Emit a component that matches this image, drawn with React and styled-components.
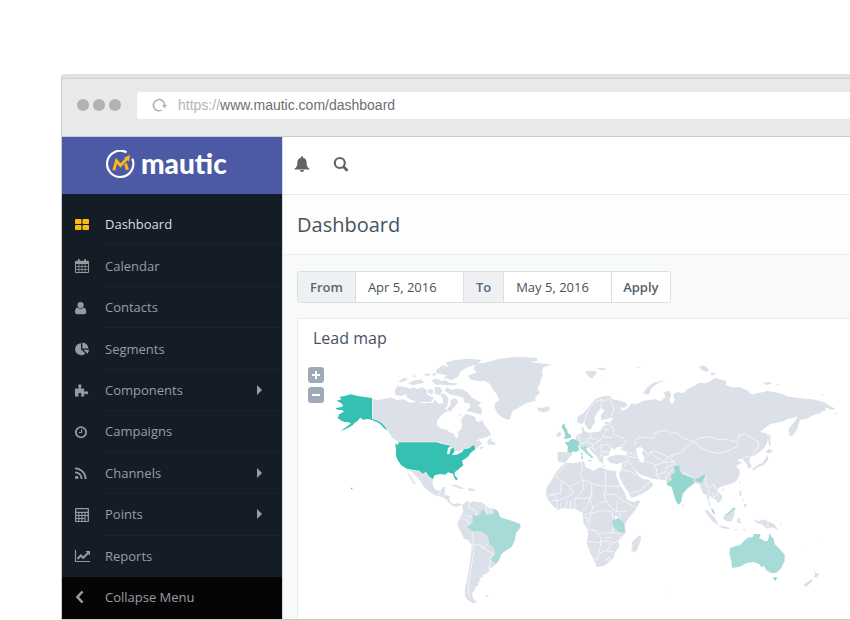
import React, { useState } from "react";
import styled, { createGlobalStyle } from "styled-components";

const GlobalStyle = createGlobalStyle`
  * {
    box-sizing: border-box;
  }

  body {
    margin: 0;
    background: #fff;
    color: #47535f;
    font-family: "Open Sans", "Noto Sans", sans-serif;
    font-size: 13px;
    overflow-x: hidden;
  }

  button,
  input {
    font: inherit;
    color: inherit;
  }
`;

const Page = styled.div`
  padding: 74px 0 0 61px;
`;

const Browser = styled.div`
  border: 1px solid #c9cbcc;
  border-right: none;
  border-top: 4px solid #e2e2e2;
  border-top-left-radius: 4px;
  overflow: hidden;
`;

const Chrome = styled.header`
  display: flex;
  align-items: center;
  height: 59px;
  padding: 0 0 5px 15px;
  background: #e8e9ea;
  border-top: 1px solid #cdcecf;
  border-bottom: 1px solid #c9cbcc;
`;

const Dots = styled.div`
  display: flex;
  gap: 4px;
  width: 60px;
`;

const Dot = styled.span`
  width: 12px;
  height: 12px;
  border-radius: 50%;
  background: #b1b2b4;
`;

const Address = styled.label`
  flex: 1;
  display: flex;
  align-items: center;
  height: 27px;
  padding-left: 15px;
  background: #fff;
  border-radius: 3px 0 0 3px;
  font-family: "Liberation Sans", Arial, sans-serif;
  font-size: 14px;
  color: #b3b4b6;
`;

const Scheme = styled.span`
  margin-left: 11px;
`;

const AddressInput = styled.input`
  flex: 1;
  min-width: 0;
  padding: 0;
  border: none;
  outline: none;
  background: none;
  color: #6d6f73;
`;

const Window = styled.div`
  display: flex;
`;

const Sidebar = styled.aside`
  flex: none;
  display: flex;
  flex-direction: column;
  width: 221px;
  background: #141c26;
  border-right: 1px solid #d5d8de;
`;

const Brand = styled.a`
  display: flex;
  align-items: center;
  gap: 6px;
  height: 57px;
  padding: 0 0 2px 44px;
  background: #4c59a5;
  color: #fff;
  text-decoration: none;
`;

const BrandName = styled.span`
  padding-bottom: 4px;
  font-family: Lato, sans-serif;
  font-size: 28px;
  font-weight: 900;
  line-height: 32px;
`;

const Menu = styled.nav`
  display: grid;
  grid-auto-rows: 1fr;
  height: 383px;
  padding-top: 10px;
`;

const MenuLink = styled.a`
  display: flex;
  align-items: center;
  padding-left: 12px;
  color: ${({ active }) => (active ? `#dcdee0` : `#9a9ea3`)};
  text-decoration: none;

  > svg {
    flex: none;
    color: ${({ active }) => (active ? `#fdb913` : `#96999e`)};
  }
`;

const MenuLabel = styled.span`
  flex: 1;
  align-self: stretch;
  display: flex;
  align-items: center;
  justify-content: space-between;
  margin-left: 15px;
  padding-right: 19px;
  border-bottom: 1px solid ${({ last }) => (last ? `transparent` : `#1b232d`)};
`;

const Collapse = styled.button`
  display: flex;
  align-items: center;
  gap: 15px;
  height: 42px;
  padding: 0 0 2px 12px;
  border: none;
  background: #050506;
  color: #9a9ea3;
  cursor: pointer;
`;

const Main = styled.main`
  flex: 1;
  min-width: 0;
  display: flex;
  flex-direction: column;
  background: #f8faf9;
`;

const TopBar = styled.div`
  display: flex;
  align-items: center;
  gap: 23px;
  height: 58px;
  padding: 0 0 4px 11px;
  background: #fff;
  border-bottom: 1px solid #e9ecec;
`;

const IconButton = styled.button`
  display: flex;
  padding: 0;
  border: none;
  background: none;
  color: #5f6467;
  cursor: pointer;
`;

const TitleBar = styled.div`
  height: 60px;
  padding-left: 14px;
  background: #fdfdfd;
  border-bottom: 1px solid #edf0f1;
`;

const Title = styled.h1`
  margin: 0;
  font-size: 20px;
  font-weight: 400;
  line-height: 60px;
`;

const Content = styled.div`
  flex: 1;
  display: flex;
  flex-direction: column;
  align-items: stretch;
  gap: 15px;
  padding: 16px 0 0 14px;
`;

const DateForm = styled.form`
  align-self: flex-start;
  display: flex;
  height: 32px;
  border: 1px solid #dcdfe1;
  border-radius: 3px;
  background: #fff;
  overflow: hidden;
`;

const FieldLabel = styled.label`
  padding: 0 12px;
  background: #eef0f4;
  border-right: 1px solid #dcdfe1;
  color: #5a6773;
  font-weight: 600;
  line-height: 30px;
`;

const DateInput = styled.input`
  width: 108px;
  padding: 0 12px;
  border: none;
  border-right: 1px solid #dcdfe1;
  outline: none;
`;

const Apply = styled.button`
  padding: 0 11px;
  border: none;
  background: #fff;
  color: #53606c;
  font-weight: 600;
  cursor: pointer;
`;

const Card = styled.section`
  flex: 1;
  padding-top: 9px;
  background: #fff;
  border: 1px solid #e8ebec;
  border-right: none;
  border-bottom: none;
`;

const CardTitle = styled.h2`
  margin: 0 0 2px;
  padding-left: 15px;
  font-size: 16px;
  font-weight: 400;
  line-height: 20px;
`;

const MapArea = styled.div`
  position: relative;
  padding-left: 2px;
`;

const ZoomButtons = styled.div`
  position: absolute;
  top: 17px;
  left: 10px;
  display: grid;
  gap: 4px;
`;

const ZoomButton = styled.button`
  display: grid;
  place-items: center;
  width: 16px;
  height: 16px;
  padding: 0;
  border: none;
  border-radius: 3px;
  background: #9fa9b7;
  color: #fff;
  cursor: pointer;
`;

const MapSvg = styled.svg`
  display: block;
  width: 100%;
  height: 269px;
  fill: #dce0e8;
  stroke-linejoin: round;

  .lines {
    fill: none;
    stroke: #f3f5f8;
    stroke-width: 3;
  }
  .water {
    fill: #fff;
  }
  .high {
    fill: #36c0b2;
  }
  .mid {
    fill: #94d6d0;
  }
  .low {
    fill: #a7dbd8;
  }
`;

const Icon = ({ children, size = 16 }) => (
  <svg
    width={size}
    height={size}
    viewBox="0 0 16 16"
    fill="currentColor"
    aria-hidden="true"
  >
    {children}
  </svg>
);

const icons = {
  dashboard: (
    <>
      <rect x="1" y="2" width="6.500" height="5" rx="1" />
      <rect x="8.500" y="2" width="6.500" height="5" rx="1" />
      <rect x="1" y="8" width="6.500" height="5" rx="1" />
      <rect x="8.500" y="8" width="6.500" height="5" rx="1" />
    </>
  ),
  calendar: (
    <path
      d="M4 1h1.600v1.700h4.800V1H12v1.700h2A1 1 0 0 1 15 3.700V14a1 1 0 0 1-1 1H2a1 1 0 0 1-1-1V3.700a1 1 0 0 1 1-1h2zM2 6v2h2.500V6zM5.300 6v2h2.300V6zM8.400 6v2h2.300V6zM11.500 6v2H14V6zM2 8.800v2.200h2.500V8.800zM5.300 8.800v2.200h2.300V8.800zM8.400 8.800v2.200h2.300V8.800zM11.500 8.800v2.200H14V8.800zM2 11.800V14h2.500v-2.200zM5.300 11.800V14h2.300v-2.200zM8.400 11.800V14h2.300v-2.200zM11.500 11.800V14H14v-2.200z"
      fillRule="evenodd"
    />
  ),
  user: (
    <path d="M6.600 2a3.100 3.100 0 1 1 0 6.200 3.100 3.100 0 0 1 0-6.200zM3.600 7.600a4.400 4.400 0 0 0 6 0c2 .3 2.700 2.200 2.700 4.400 0 1.300-.8 2.200-2 2.200H3c-1.200 0-2-.9-2-2.200 0-2.200.7-4.100 2.600-4.400z" />
  ),
  pie: (
    <path d="M7 2.200v6l4.300 4.300A6 6 0 1 1 7 2.200zM8.300 1.400a6.300 6.300 0 0 1 6.200 6.100H8.300zM9.400 8.700h5.600a6 6 0 0 1-1.700 4z" />
  ),
  puzzle: (
    <path d="M1 6.500h3.700c.6-.8-.5-1.300-.5-2.500C4.200 3 4.900 2.200 5.800 2.200S7.400 3 7.400 4c0 1.200-1 1.700-.5 2.500h3.300v3c.9.800 1.200-.3 2.400-.3 1 0 1.600.7 1.600 1.500s-.6 1.500-1.600 1.500c-1.200 0-1.600-1-2.400-.3v2.600H7.100c-.6-.7.300-1 .3-2 0-.8-.6-1.400-1.500-1.400s-1.600.6-1.600 1.400c0 1 .9 1.300.4 2H1z" />
  ),
  clock: (
    <path
      d="M7 2.200a6 6 0 1 1 0 12 6 6 0 0 1 0-12zM7 4a4.200 4.200 0 1 0 0 8.400A4.200 4.200 0 0 0 7 4zM7 5.300h1.200v3.800H4.800V8H7z"
      fillRule="evenodd"
    />
  ),
  rss: (
    <g fill="none" stroke="currentColor" strokeWidth="1.800">
      <circle cx="2.700" cy="12.400" r="1.700" fill="currentColor" stroke="none" />
      <path d="M1 7.300a6.600 6.600 0 0 1 6.600 6.600M1 3.300a10.600 10.600 0 0 1 10.600 10.600" />
    </g>
  ),
  calculator: (
    <path
      d="M2 1h12a1 1 0 0 1 1 1v12a1 1 0 0 1-1 1H2a1 1 0 0 1-1-1V2a1 1 0 0 1 1-1zM2.300 2.300v2.400h11.400V2.300zM2.300 6v2h2V6zM5.400 6v2h2V6zM8.500 6v2h2V6zM11.600 6v2h2V6zM2.300 9v2h2V9zM5.400 9v2h2V9zM8.500 9v2h2V9zM2.300 12v2h2v-2zM5.400 12v2h2v-2zM8.500 12v2h2v-2zM11.600 9v5h2V9z"
      fillRule="evenodd"
    />
  ),
  chart: (
    <g fill="none" stroke="currentColor">
      <path d="M1.500 2v11.500H17" strokeWidth="1.200" />
      <path d="M3.500 11l3.300-3.500 2.400 2.300L14.500 4.500" strokeWidth="2" />
      <path d="M11.500 3H16v4.500z" fill="currentColor" stroke="none" />
    </g>
  ),
  back: (
    <path d="M8.500 2.500L3.500 8l5 5.500" fill="none" stroke="currentColor" strokeWidth="2.600" />
  ),
  bell: (
    <path d="M8 .3c.6 0 1 .4 1 1v.5c2.500.5 3.600 2.400 3.600 4.600 0 3.500 1 4.900 2.900 6.300v.8H.5v-.8c1.900-1.400 2.900-2.800 2.900-6.300 0-2.200 1.100-4.100 3.600-4.600v-.5c0-.6.400-1 1-1zM6 14h4a2 2 0 0 1-4 0z" />
  ),
  search: (
    <g fill="none" stroke="currentColor" strokeWidth="2.200">
      <circle cx="6.800" cy="7" r="5" />
      <path d="M10.500 10.700l4 4" strokeWidth="2.800" />
    </g>
  )
};

const menuItems = [
  { name: "Dashboard", icon: "dashboard", active: true },
  { name: "Calendar", icon: "calendar" },
  { name: "Contacts", icon: "user" },
  { name: "Segments", icon: "pie" },
  { name: "Components", icon: "puzzle", nested: true },
  { name: "Campaigns", icon: "clock" },
  { name: "Channels", icon: "rss", nested: true },
  { name: "Points", icon: "calculator", nested: true },
  { name: "Reports", icon: "chart" }
];

const LogoMark = () => (
  <svg width="29" height="29" viewBox="0 0 86 86" fill="none" aria-hidden="true">
    <path d="M61 7A39 39 0 1 0 78 26" stroke="#fff" strokeWidth="6.500" />
    <path d="M23 60L31 32 43 46 64 24" stroke="#fdb913" strokeWidth="8.500" />
    <path d="M54 23L71 15 68 34zM54 44l7-7 7 21-9 2z" fill="#fdb913" />
  </svg>
);

const Reload = () => (
  <svg width="15" height="15" viewBox="0 0 15 15" fill="none" aria-hidden="true">
    <path d="M9.500 12.200A5.600 5.600 0 1 1 12.600 7" stroke="#aeb0b2" strokeWidth="1.500" />
    <path d="M10 7h5l-2.500 3.200z" fill="#aeb0b2" />
  </svg>
);

// World map, each group keeps its own origin
const WorldMap = () => (
  <MapSvg
    viewBox="0 0 1650 807"
    preserveAspectRatio="xMinYMin meet"
    role="img"
    aria-label="Lead map"
  >
    {/* North America */}
    <g>
      <path d="M217 146L232 150 255 146 272 142 290 150 312 148 330 158 352 155 372 160 398 158 405 150 418 162 430 158 428 146 420 134 434 130 446 148 442 168 434 176 446 182 430 190 420 200 411 212 412 228 424 236 440 240 452 248 462 250 464 260 472 264 476 256 473 246 484 236 487 222 482 212 490 200 496 192 510 195 524 200 528 213 538 216 546 210 556 228 566 240 574 254 560 262 540 266 526 274 540 272 546 282 534 290 528 296 524 286 508 293 492 298 478 304 465 302 452 290 440 284 425 279 410 275 292 275 276 262 264 244 252 226 240 216 217 207z" />
      <path d="M562 274l10-12 2 10 12 6 0 8-10-2-12 0zM540 292l14-4-8 8-8 2z" />
      <path d="M285 120L292 108 312 110 330 116 326 130 305 138 286 134zM322 124L338 112 352 118 366 112 380 120 382 134 402 144 392 156 368 156 350 156 330 148 318 140zM294 96L308 86 322 82 320 90 306 96zM325 100L340 92 364 88 372 98 354 102 338 106zM372 72l16-2 4 6-16 2zM336 78l12-2-2 6zM400 68l10 2-6 8-8-2zM394 92l12-6 16 4 2 12-14 4zM420 96L434 90 448 98 472 100 468 106 440 106 424 104zM404 112l16 0 8 12-10 12-14-6zM386 116l14 4-4 14-12-6z" />
      <path d="M408 60L428 46 448 52 436 38 465 30 505 26 545 30 532 42 502 52 482 64 474 80 456 90 432 84 440 76 424 72 410 70z" />
      <path d="M434 122L440 112 456 120 470 116 488 118 504 128 514 142 545 158 534 166 546 178 544 196 524 188 498 182 512 172 508 160 494 158 490 144 474 138 452 134zM452 150l16-6 6 14-12 14-12 14-8-10 10-10zM474 190l8 2-2 8z" />
      <path d="M503 78L530 66 520 56 528 42 555 38 600 26 655 20 710 24 715 32 690 36 720 40 755 44 730 52 725 66 730 76 723 88 720 102 712 115 720 130 705 142 708 152 682 158 660 170 638 182 630 206 623 210 605 202 592 190 583 170 585 160 598 150 590 132 578 118 570 102 555 92 535 94 512 88z" />
      <path d="M710 172L725 175 745 168 751 178 735 187 717 184z" />
      <path d="M318 358L340 362 358 364 368 374 378 368 386 380 398 390 398 405 406 420 422 422 428 412 438 410 434 424 434 434 448 438 450 455 460 462 474 460 488 464 478 467 470 470 458 468 446 458 440 448 424 440 405 436 386 424 370 408 362 394 348 378 336 366z" />
      <path d="M318 360l14 18 12 18 4 8-6-2-12-18zM452 406l14-2 16 6 12 6-16 0-12-6zM504 414l16 2 8 5-20 2z" />
      <path className="lines" d="M217 146V207L240 216 264 244M422 424L414 438M434 434L428 442" />
      <path
        className="high"
        d="M110 152L124 148 118 141 134 138 151 133 178 139 216 144 216 207 228 210 240 216 252 226 262 241 254 236 243 224 232 217 216 210 203 207 190 209 180 203 172 214 164 218 158 226 140 236 120 244 140 230 153 220 146 217 134 216 124 212 113 204 118 192 131 186 128 181 112 179 106 175 122 172 130 168 124 160zM153 413h4v4h-4z"
      />
      <path
        className="high"
        d="M286 280L294 285 296 277 410 277 425 281 440 285 452 288 444 294 441 312 448 313 452 297 460 293 464 303 456 316 470 314 486 306 492 298 508 295 518 286 524 288 526 298 512 308 506 318 496 326 486 332 490 346 476 358 464 367 464 376 472 384 472 391 465 388 459 371 444 367 436 374 420 372 404 376 398 388 386 378 378 366 368 372 358 362 340 360 320 356 304 346 294 332 288 318 288 300z"
      />
    </g>

    {/* South America */}
    <g transform="translate(420 390)">
      <path d="M66 76L82 62 88 68 100 64 128 68 146 84 165 86 176 98 180 110 240 134 228 160 214 202 184 222 168 252 158 262 146 264 150 272 138 282 128 284 130 290 118 296 122 304 112 306 118 312 106 322 104 332 96 340 100 356 112 366 98 370 84 360 76 352 74 330 80 306 86 270 92 230 96 196 84 180 72 176 60 150 52 134 56 118 64 108 70 92zM134 348l8-3 4 3-8 3z" />
      <path
        className="lines"
        d="M88 68L86 84 104 88 110 106M56 120L70 112 84 122 88 136M98 154L100 196 120 194 128 206 146 190M98 196L102 214 92 270 84 330 90 354M122 194L142 212 150 216 160 222 152 238M152 240L146 264M138 78L140 104M152 86V102M76 106L98 112"
      />
      <path
        className="low"
        d="M82 142L90 134 98 130 98 106 110 108 122 102 122 92 134 92 138 104 150 102 164 100 162 88 172 92 177 102 180 112 200 118 220 124 240 132 242 142 228 160 224 184 214 202 196 210 184 222 178 240 168 252 152 238 166 222 162 204 148 192 144 168 124 154 98 154z"
      />
    </g>

    {/* Africa */}
    <g>
      <path d="M795 338L820 340 852 334 856 350 880 362 900 352 925 360 950 364 948 376 960 404 975 430 982 450 1000 456 1020 450 1018 458 1008 478 986 504 975 522 977 548 965 560 956 572 958 590 946 606 942 622 928 636 912 648 890 651 882 630 872 612 860 580 864 560 864 542 850 516 848 488 834 482 828 476 808 476 790 474 772 480 760 468 746 452 738 438 740 410 750 398 765 372 775 358z" />
      <path d="M1021 556L1010 562 994 578 998 586 993 600 1002 607 1010 602 1024 566z" />
      <path
        className="lines"
        d="M795 338L792 352 766 378 810 410 850 390 840 370 848 355 845 337M766 378L752 392M784 392L782 430 750 432M810 410L820 430M850 390L875 400 875 440M917 362V408H965M875 400L917 412 915 430M850 390V420L825 446"
      />
      <g transform="translate(420 390)">
        <path
          className="lines"
          d="M320 48L345 46 352 62 372 56 400 40M335 62L352 62 350 88M362 68V86M380 60L376 86M392 62V86M404 56V86M404 56L450 54 440 80 428 92M450 54L456 30M450 54L458 84 452 100 430 104M456 86L478 70 498 64 512 80 528 94 560 94M498 64L490 34M532 62L530 92M532 50L560 68 590 84M495 42L532 44M452 100L480 92 516 94 520 120M452 102L448 130 444 148 470 152 484 180 480 188 444 184M520 138L516 158 484 160M484 184L476 220 472 240 464 236M476 220L500 212 516 190 536 184M484 184H512M516 158L532 160 548 158M538 94L540 116M434 112L444 114 440 134M536 160L540 176M496 174L514 172M500 212L524 216"
        />
        <circle className="lines" cx="507" cy="237" r="5" />
        <path className="water" d="M524 108h8v8l-6 4z" />
        <path
          className="low"
          d="M518 120L536 116 552 128 552 140 556 156 540 158 526 146 518 138z"
        />
      </g>
    </g>

    {/* Europe and Asia */}
    <g transform="translate(720 0)">
      <path d="M112 200L130 190 146 172 165 148 190 138 212 138 216 148 232 150 258 158 262 168 252 174 240 170 246 182 262 176 274 160 290 162 310 152 345 148 362 154 376 142 372 126 386 122 394 132 388 150 396 164 404 150 400 132 412 126 430 130 444 116 466 106 480 98 500 100 525 84 560 94 556 104 575 112 600 112 620 120 636 134 650 130 672 126 680 122 720 130 745 140 775 144 800 146 830 150 856 158 870 168 886 176 876 180 856 172 858 180 846 184 840 190 820 196 800 206 780 210 776 222 770 240 756 260 748 254 746 236 760 220 774 198 760 204 745 206 730 214 710 218 690 222 672 236 660 246 680 250 686 264 676 290 660 305 642 318 630 320 628 334 636 350 626 356 618 340 606 326 590 330 606 338 588 348 598 360 600 372 590 392 572 402 556 406 540 412 532 420 546 438 546 448 534 460 526 448 514 442 508 436 506 452 512 466 508 468 503 450 500 434 488 430 484 418 478 402 464 400 440 420 428 436 424 456 415 464 404 440 396 412 392 404 382 398 376 390 350 388 330 384 316 378 305 376 292 366 284 362 300 382 312 388 322 388 334 396 340 404 326 420 300 434 274 444 266 428 250 404 240 384 236 372 244 360 246 338 230 342 210 338 200 326 208 320 230 314 258 316 262 306 240 298 250 290 230 292 222 302 216 290 210 304 206 316 190 320 190 342 178 334 170 318 158 308 146 292 134 288 118 292 106 270 110 256 120 250 128 248 124 236 128 228 132 238 136 246 150 248 168 246 182 244 186 230 196 226 192 216 208 216 218 208 216 202 204 206 184 210 182 196 194 182 184 174 172 186 162 206 166 218 158 226 154 238 146 238 138 228 134 216 124 222 112 218z" />
      <path d="M54 305L88 308 98 312 84 328 76 338 62 336 54 334 52 318zM50 252L58 244 64 250 60 260 50 260z" />
      <path d="M135 64L152 62 172 64 165 76 156 86 144 78zM166 56l22-3 14 4-16 4zM182 76l6 0 0 4zM286 52l8 2 8-4M310 128L322 112 340 98 376 90 350 102 334 114 326 134 314 132zM478 50L492 46 508 60 500 66 484 60zM512 68l16 0-6 8-10 0zM668 98L690 96 696 102 676 104zM706 102l12 2-8 2zM842 132l10 2-4 3z" />
      <path d="M686 248L692 262 690 276 694 286 688 288 684 270zM684 296L698 302 690 310 678 308zM682 314L686 328 672 344 656 350 640 362 638 356 654 344 668 338 676 326zM598 392l4 2-4 10zM546 416l8 0-4 8zM186 346l12 2-10 2z" />
      <path className="water" d="M288 296L300 290 312 298 306 310 314 324 310 338 300 336 292 318z" />
      <path
        className="lines"
        d="M134 214L138 196 150 174 168 154 186 148 196 152 210 144M182 174L186 148M210 146L214 160 222 180 214 198M214 210L208 222 222 240 220 252 250 264 258 276 240 290M192 226L210 222M186 236L206 238M206 238L190 252 190 262 218 262M152 248V264L176 272 190 262M120 252L116 268 124 282 140 278 142 268 152 264M142 278L160 284 180 272M150 290L166 300 180 286 204 284 210 292M186 304L208 308M176 318L196 318M182 286L186 304 180 320M160 284L156 296"
      />
      <path
        className="lines"
        d="M288 284L284 270 300 262 340 264 345 248 380 240 395 250 410 248 425 262 440 268 458 274 440 290 425 308 404 312 385 322 360 310 345 304 330 306 326 316 312 300M330 306L345 320 370 334 385 322M312 332L345 344 350 360 348 378M345 344L375 338 400 334 404 342 380 352 376 366 352 374 360 388M404 312L392 326 404 340M458 274L480 264 510 260 530 268 560 268 592 276 594 288 570 300 540 310 510 306 484 294 468 280zM592 276L596 256 616 250 640 268 656 276 654 296 640 304 642 318M258 320L266 336 280 352 292 366M262 334L244 362 264 362 290 374M246 340L262 334M258 316L276 322 290 324M262 306L290 316M266 430L300 424 312 408 334 396M376 390L384 374 400 352M426 368L462 384M500 374L496 398 508 418 504 434M508 414L520 404 532 418M520 400L536 430 522 442 516 434 520 426M606 326L628 318"
      />
      <path
        className="mid"
        d="M74 276L86 276 90 270 100 266 118 276 114 288 118 300 108 306 98 304 94 310 82 306 84 290zM66 224L74 222 76 232 82 240 84 250 94 256 92 264 70 267 76 258 74 248 70 240 66 234z"
      />
      <path
        className="low"
        d="M118 293L134 288 144 290 138 298 148 310 160 322 156 326 148 318 134 306 126 298zM124 308h5v8h-5zM124 318h5v9h-5zM144 330h10l-2 6zM884 188l8 1-2 3z"
      />
      <path
        className="mid"
        d="M400 350L418 346 418 358 424 370 440 378 460 384 462 400 442 414 428 430 422 458 415 464 406 450 398 420 394 410 382 406 380 398 396 390 392 378 406 366zM466 386L478 384 488 376 498 376 490 386 486 398 476 396 466 392z"
      />
    </g>

    {/* Oceania */}
    <g transform="translate(1020 330)">
      <path d="M192 148L204 152 222 170 234 188 230 194 216 182 204 166zM234 196l16 2 20 6-4 4-20-4zM282 208l14 1-10 3zM308 208l12 1-8 4zM250 168L262 160 276 146 286 148 282 168 276 184 258 184 250 176zM292 176l14-2-8 6 6 10-6 0-6-4zM298 92l6 2 0 14-6-2zM312 132l8 0-2 10-8-2zM342 178L356 184 366 178 386 184 404 194 414 210 396 202 380 206 364 192 350 190zM418 194l10-2-6 5zM126 130l6 8-4 4zM482 258l7 4-3 0zM534 244l6-1-4 3zM80 395h4v3h-4z" />
      <path d="M518 324L528 338 538 342 528 354 522 350 526 340zM520 354L514 366 500 380 490 376 506 362z" />
      <path className="lines" d="M384 182V206" />
      <path
        className="low"
        d="M270 264L286 258 302 254 314 240 326 232 338 232 342 222 362 222 358 234 376 244 384 242 388 218 394 230 400 234 404 252 420 268 434 284 434 302 424 324 410 338 394 340 378 330 372 318 364 322 358 312 340 306 318 310 300 320 276 324 274 302 268 282zM252 166L266 158 280 142 288 146 276 152 266 164zM212 144L220 148 226 164 218 158zM306 118l6 4-4 2z"
      />
      <path className="mid" d="M398 352L412 352 406 364z" />
    </g>
  </MapSvg>
);

const App = () => {
  const [url, setUrl] = useState("www.mautic.com/dashboard");
  const [from, setFrom] = useState("Apr 5, 2016");
  const [to, setTo] = useState("May 5, 2016");

  return (
    <>
      <GlobalStyle />
      <Page>
        <Browser>
          <Chrome>
            <Dots>
              <Dot />
              <Dot />
              <Dot />
            </Dots>
            <Address>
              <Reload />
              <Scheme>https://</Scheme>
              <AddressInput
                value={url}
                onChange={(e) => setUrl(e.target.value)}
              />
            </Address>
          </Chrome>
          <Window>
            <Sidebar>
              <Brand href="#">
                <LogoMark />
                <BrandName>mautic</BrandName>
              </Brand>
              <Menu>
                {menuItems.map(({ name, icon, active, nested }, i) => (
                  <MenuLink key={name} href="#" active={active}>
                    <Icon>{icons[icon]}</Icon>
                    <MenuLabel last={i === menuItems.length - 1}>
                      {name}
                      {nested && (
                        <svg width="8" height="10" viewBox="0 0 8 10">
                          <path d="M2 0l5 5-5 5z" fill="#9a9ea3" />
                        </svg>
                      )}
                    </MenuLabel>
                  </MenuLink>
                ))}
              </Menu>
              <Collapse>
                <Icon>{icons.back}</Icon>
                Collapse Menu
              </Collapse>
            </Sidebar>
            <Main>
              <TopBar>
                <IconButton aria-label="Notifications">
                  <Icon>{icons.bell}</Icon>
                </IconButton>
                <IconButton aria-label="Search">
                  <Icon>{icons.search}</Icon>
                </IconButton>
              </TopBar>
              <TitleBar>
                <Title>Dashboard</Title>
              </TitleBar>
              <Content>
                <DateForm onSubmit={(e) => e.preventDefault()}>
                  <FieldLabel htmlFor="from">From</FieldLabel>
                  <DateInput
                    id="from"
                    value={from}
                    onChange={(e) => setFrom(e.target.value)}
                  />
                  <FieldLabel htmlFor="to">To</FieldLabel>
                  <DateInput
                    id="to"
                    value={to}
                    onChange={(e) => setTo(e.target.value)}
                  />
                  <Apply>Apply</Apply>
                </DateForm>
                <Card>
                  <CardTitle>Lead map</CardTitle>
                  <MapArea>
                    <WorldMap />
                    <ZoomButtons>
                      <ZoomButton aria-label="Zoom in">
                        <svg width="8" height="8" viewBox="0 0 8 8">
                          <path d="M4 0v8M0 4h8" stroke="#fff" strokeWidth="2" />
                        </svg>
                      </ZoomButton>
                      <ZoomButton aria-label="Zoom out">
                        <svg width="8" height="8" viewBox="0 0 8 8">
                          <path d="M0 4h8" stroke="#fff" strokeWidth="2" />
                        </svg>
                      </ZoomButton>
                    </ZoomButtons>
                  </MapArea>
                </Card>
              </Content>
            </Main>
          </Window>
        </Browser>
      </Page>
    </>
  );
};

export default App;
